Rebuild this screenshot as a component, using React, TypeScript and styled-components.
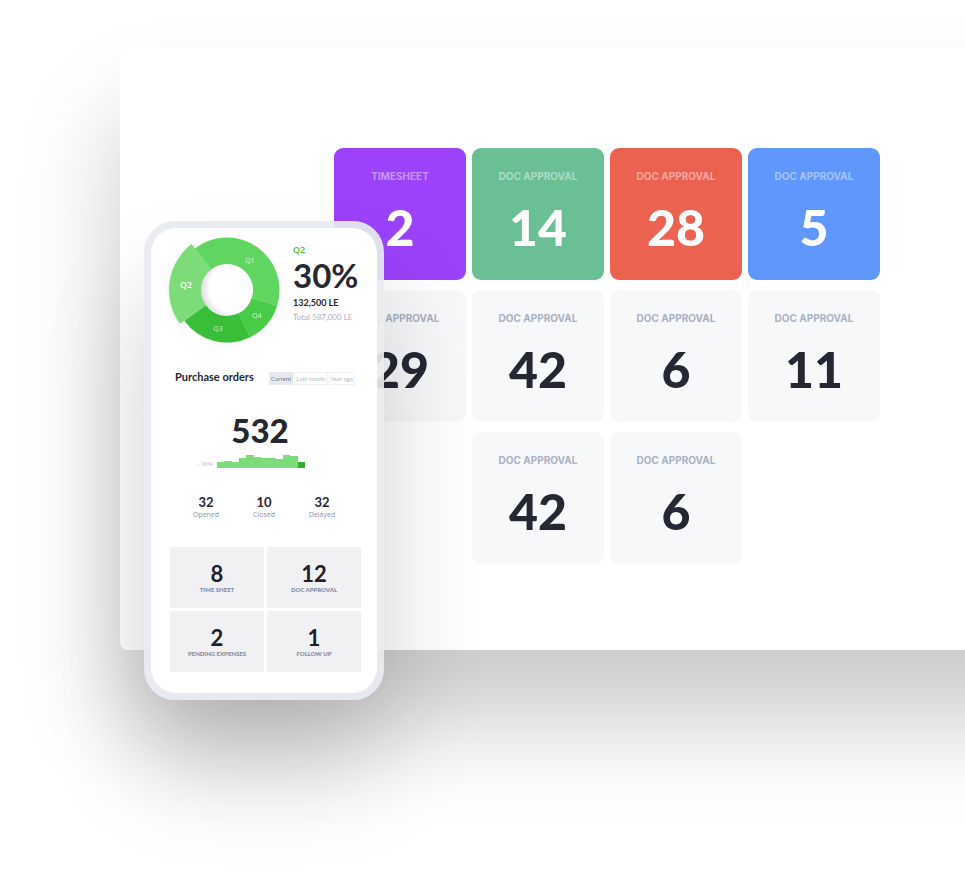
import React from "react";
import styled, { createGlobalStyle } from "styled-components";

const GlobalStyle = createGlobalStyle`
  * { box-sizing: border-box; }
  body {
    margin: 0;
    background: #ffffff;
    color: #252733;
    font-family: "Lato", "Open Sans", sans-serif;
  }
`;

const Stage = styled.main`
  position: relative;
  min-height: 100vh;
  padding: 48px 0 242px 120px;
  overflow: hidden;
`;

const Panel = styled.section`
  margin-right: -240px;
  padding: 100px 0 86px 214px;
  border-radius: 8px;
  background: #ffffff;
  box-shadow: 0 70px 100px rgba(0, 0, 0, 0.21);
`;

const TileGrid = styled.div`
  display: grid;
  grid-template-columns: repeat(4, 132px);
  gap: 10px 6px;
`;

const Tile = styled.article<{ $fill?: string; $column?: number }>`
  display: flex;
  flex-direction: column;
  align-items: center;
  height: 132px;
  padding-top: 20px;
  border-radius: 9px;
  background: ${(p) => p.$fill ?? "#f7f8fa"};
  color: ${(p) => (p.$fill ? "#ffffff" : "#252733")};
  grid-column: ${(p) => p.$column ?? "auto"};
`;

const TileLabel = styled.h2<{ $light: boolean }>`
  margin: 0;
  font-family: "Inter", "Open Sans", sans-serif;
  font-size: 10px;
  line-height: 16px;
  font-weight: 700;
  text-transform: uppercase;
  color: ${(p) => (p.$light ? "rgba(255, 255, 255, 0.45)" : "#a9b1c1")};
`;

const TileValue = styled.p`
  margin: 13px 0 0;
  font-size: 50px;
  line-height: 60px;
  font-weight: 900;
`;

const Phone = styled.aside`
  position: absolute;
  top: 221px;
  left: 144px;
  width: 240px;
  padding: 7px;
  border-radius: 31px;
  background: rgba(231, 235, 240, 0.92);
  box-shadow: 0 70px 100px rgba(0, 0, 0, 0.18);
`;

const Screen = styled.div`
  padding: 9px 16px 21px 18px;
  border-radius: 25px;
  background: #ffffff;
`;

const Summary = styled.section`
  display: flex;
  gap: 13px;
`;

const Donut = styled.svg`
  flex: none;
  display: block;
  width: 111px;
  height: 106px;
  filter: drop-shadow(0 1px 2px rgba(0, 0, 0, 0.08));
  text {
    font-family: "Open Sans", sans-serif;
    font-size: 7px;
    text-anchor: middle;
    fill: rgba(255, 255, 255, 0.75);
  }
  text.active {
    font-size: 9px;
    font-weight: 600;
    fill: #ffffff;
  }
`;

const Figures = styled.div`
  padding-top: 7px;
  white-space: nowrap;
`;

const Quarter = styled.p`
  margin: 0;
  font-family: "Open Sans", sans-serif;
  font-size: 9px;
  line-height: 12px;
  font-weight: 600;
  color: #43c344;
`;

const Percent = styled.p`
  margin: 0 0 2px;
  font-size: 33px;
  line-height: 39px;
  font-weight: 700;
`;

const Amount = styled.p`
  margin: 0;
  font-size: 9px;
  line-height: 12px;
  font-weight: 700;
`;

const Total = styled.p`
  margin: 2px 0 0;
  font-size: 8px;
  line-height: 12px;
  color: #a9b0c0;
`;

const OrdersHeader = styled.header`
  display: flex;
  align-items: center;
  justify-content: space-between;
  margin-top: 27px;
  padding: 0 6px;
`;

const OrdersTitle = styled.h3`
  margin: 0;
  padding-bottom: 2px;
  font-size: 11px;
  line-height: 14px;
  font-weight: 700;
`;

const Periods = styled.div`
  display: flex;
  gap: 1px;
`;

const Period = styled.button<{ $active?: boolean }>`
  height: 13px;
  padding: 0 1px;
  border: 1px solid ${(p) => (p.$active ? "#e6e9ee" : "#f0f1f5")};
  background: ${(p) => (p.$active ? "#e6e9ee" : "#ffffff")};
  color: ${(p) => (p.$active ? "#747b8b" : "#b4bac8")};
  font-family: inherit;
  font-size: 6px;
  line-height: 11px;
`;

const OrdersCount = styled.p`
  margin: 22px 0 0;
  padding-right: 10px;
  font-size: 33px;
  line-height: 44px;
  font-weight: 900;
  text-align: center;
`;

const Trend = styled.div`
  display: flex;
  align-items: flex-end;
  gap: 4px;
  margin-top: 2px;
  padding-left: 28px;
`;

const TrendLabel = styled.span`
  width: 16px;
  font-family: "Open Sans", sans-serif;
  font-size: 6px;
  line-height: 8px;
  white-space: nowrap;
  text-align: right;
  color: #b8becb;
`;

const TrendChart = styled.svg`
  display: block;
  width: 88px;
  height: 14px;
`;

const Stats = styled.dl`
  display: grid;
  grid-template-columns: repeat(3, 58px);
  margin: 26px 0 0 8px;
`;

const Stat = styled.div`
  display: flex;
  flex-direction: column-reverse;
  text-align: center;
`;

const StatLabel = styled.dt`
  font-family: "Open Sans", sans-serif;
  font-size: 7px;
  line-height: 10px;
  color: #8f97a9;
`;

const StatValue = styled.dd`
  margin: 0;
  font-size: 13px;
  line-height: 16px;
  font-weight: 700;
`;

const Tasks = styled.section`
  display: grid;
  grid-template-columns: 1fr 1fr;
  gap: 3px;
  margin: 27px 0 0 1px;
`;

const Task = styled.article`
  display: flex;
  flex-direction: column;
  align-items: center;
  height: 61px;
  padding-top: 14px;
  border-radius: 1px;
  background: #f1f1f4;
`;

const TaskValue = styled.p`
  margin: 0;
  font-size: 22px;
  line-height: 25px;
  font-weight: 700;
  color: #1d202b;
`;

const TaskLabel = styled.h4`
  margin: 0;
  font-size: 6px;
  line-height: 8px;
  font-weight: 900;
  text-transform: uppercase;
  color: #828aa0;
`;

const tiles: { label: string; value: number; fill?: string; column?: number }[] = [
  { label: "Timesheet", value: 2, fill: "#9b42fa" },
  { label: "Doc approval", value: 14, fill: "#6abf95" },
  { label: "Doc approval", value: 28, fill: "#eb6251" },
  { label: "Doc approval", value: 5, fill: "#5f97fc" },
  { label: "Doc approval", value: 29 },
  { label: "Doc approval", value: 42 },
  { label: "Doc approval", value: 6 },
  { label: "Doc approval", value: 11 },
  { label: "Doc approval", value: 42, column: 2 },
  { label: "Doc approval", value: 6, column: 3 },
];

const stats = [
  { label: "Opened", value: 32 },
  { label: "Closed", value: 10 },
  { label: "Delayed", value: 32 },
];

const tasks = [
  { label: "Time sheet", value: 8 },
  { label: "Doc approval", value: 12 },
  { label: "Pending expenses", value: 2 },
  { label: "Follow up", value: 1 },
];

const bars = [19, 22, 19, 31, 39, 33, 31, 31, 27, 39, 35, 19];

type Vector = [number, number];

function slice(from: Vector, to: Vector, outer: number, inner = 26) {
  const at = (v: Vector, r: number) => `${v[0] * r} ${v[1] * r}`;
  return `M${at(from, outer)}A${outer} ${outer} 0 0 1 ${at(to, outer)}L${at(to, inner)}A${inner} ${inner} 0 0 0 ${at(from, inner)}Z`;
}

const q1Start: Vector = [-0.61, -0.792];
const q4Start: Vector = [0.954, 0.299];
const q3Start: Vector = [0.44, 0.898];
const q2Start: Vector = [-0.812, 0.584];

function QuarterDonut() {
  return (
    <Donut viewBox="-58 -53 111 106" role="img" aria-label="Spending by quarter">
      <defs>
        <radialGradient id="hole" cx="0.64" cy="0.46" r="0.66">
          <stop offset="0.7" stopColor="#ffffff" />
          <stop offset="1" stopColor="#d9d9d9" />
        </radialGradient>
      </defs>
      <circle r="26.5" fill="url(#hole)" />
      <path d={slice(q1Start, q4Start, 52.5)} fill="#60d660" />
      <path d={slice(q4Start, q3Start, 52.5)} fill="#48cc48" />
      <path d={slice(q3Start, q2Start, 52.5)} fill="#39be3a" />
      <path d={slice(q2Start, q1Start, 58)} fill="#7ddc7a" />
      <text x="23" y="-27">Q1</text>
      <text x="30" y="28">Q4</text>
      <text x="-9" y="41">Q3</text>
      <text className="active" x="-41" y="-2">Q2</text>
    </Donut>
  );
}

export default function App() {
  return (
    <>
      <GlobalStyle />
      <Stage>
        <Panel>
          <TileGrid>
            {tiles.map((tile, i) => (
              <Tile key={i} $fill={tile.fill} $column={tile.column}>
                <TileLabel $light={Boolean(tile.fill)}>{tile.label}</TileLabel>
                <TileValue>{tile.value}</TileValue>
              </Tile>
            ))}
          </TileGrid>
        </Panel>
        <Phone>
          <Screen>
            <Summary>
              <QuarterDonut />
              <Figures>
                <Quarter>Q2</Quarter>
                <Percent>30%</Percent>
                <Amount>132,500 LE</Amount>
                <Total>Total 587,000 LE</Total>
              </Figures>
            </Summary>
            <OrdersHeader>
              <OrdersTitle>Purchase orders</OrdersTitle>
              <Periods>
                <Period type="button" $active aria-pressed="true">Current</Period>
                <Period type="button" aria-pressed="false">Last month</Period>
                <Period type="button" aria-pressed="false">Year ago</Period>
              </Periods>
            </OrdersHeader>
            <OrdersCount>532</OrdersCount>
            <Trend>
              <TrendLabel>- 96%</TrendLabel>
              <TrendChart viewBox="0 0 264 42" preserveAspectRatio="none" aria-hidden="true">
                {bars.map((h, i) => (
                  <rect
                    key={i}
                    x={i * 22}
                    y={42 - h}
                    width={22}
                    height={h}
                    shapeRendering="crispEdges"
                    fill={i === bars.length - 1 ? "#2fae33" : "#7ddc7a"}
                  />
                ))}
              </TrendChart>
            </Trend>
            <Stats>
              {stats.map((stat) => (
                <Stat key={stat.label}>
                  <StatLabel>{stat.label}</StatLabel>
                  <StatValue>{stat.value}</StatValue>
                </Stat>
              ))}
            </Stats>
            <Tasks>
              {tasks.map((task) => (
                <Task key={task.label}>
                  <TaskValue>{task.value}</TaskValue>
                  <TaskLabel>{task.label}</TaskLabel>
                </Task>
              ))}
            </Tasks>
          </Screen>
        </Phone>
      </Stage>
    </>
  );
}
